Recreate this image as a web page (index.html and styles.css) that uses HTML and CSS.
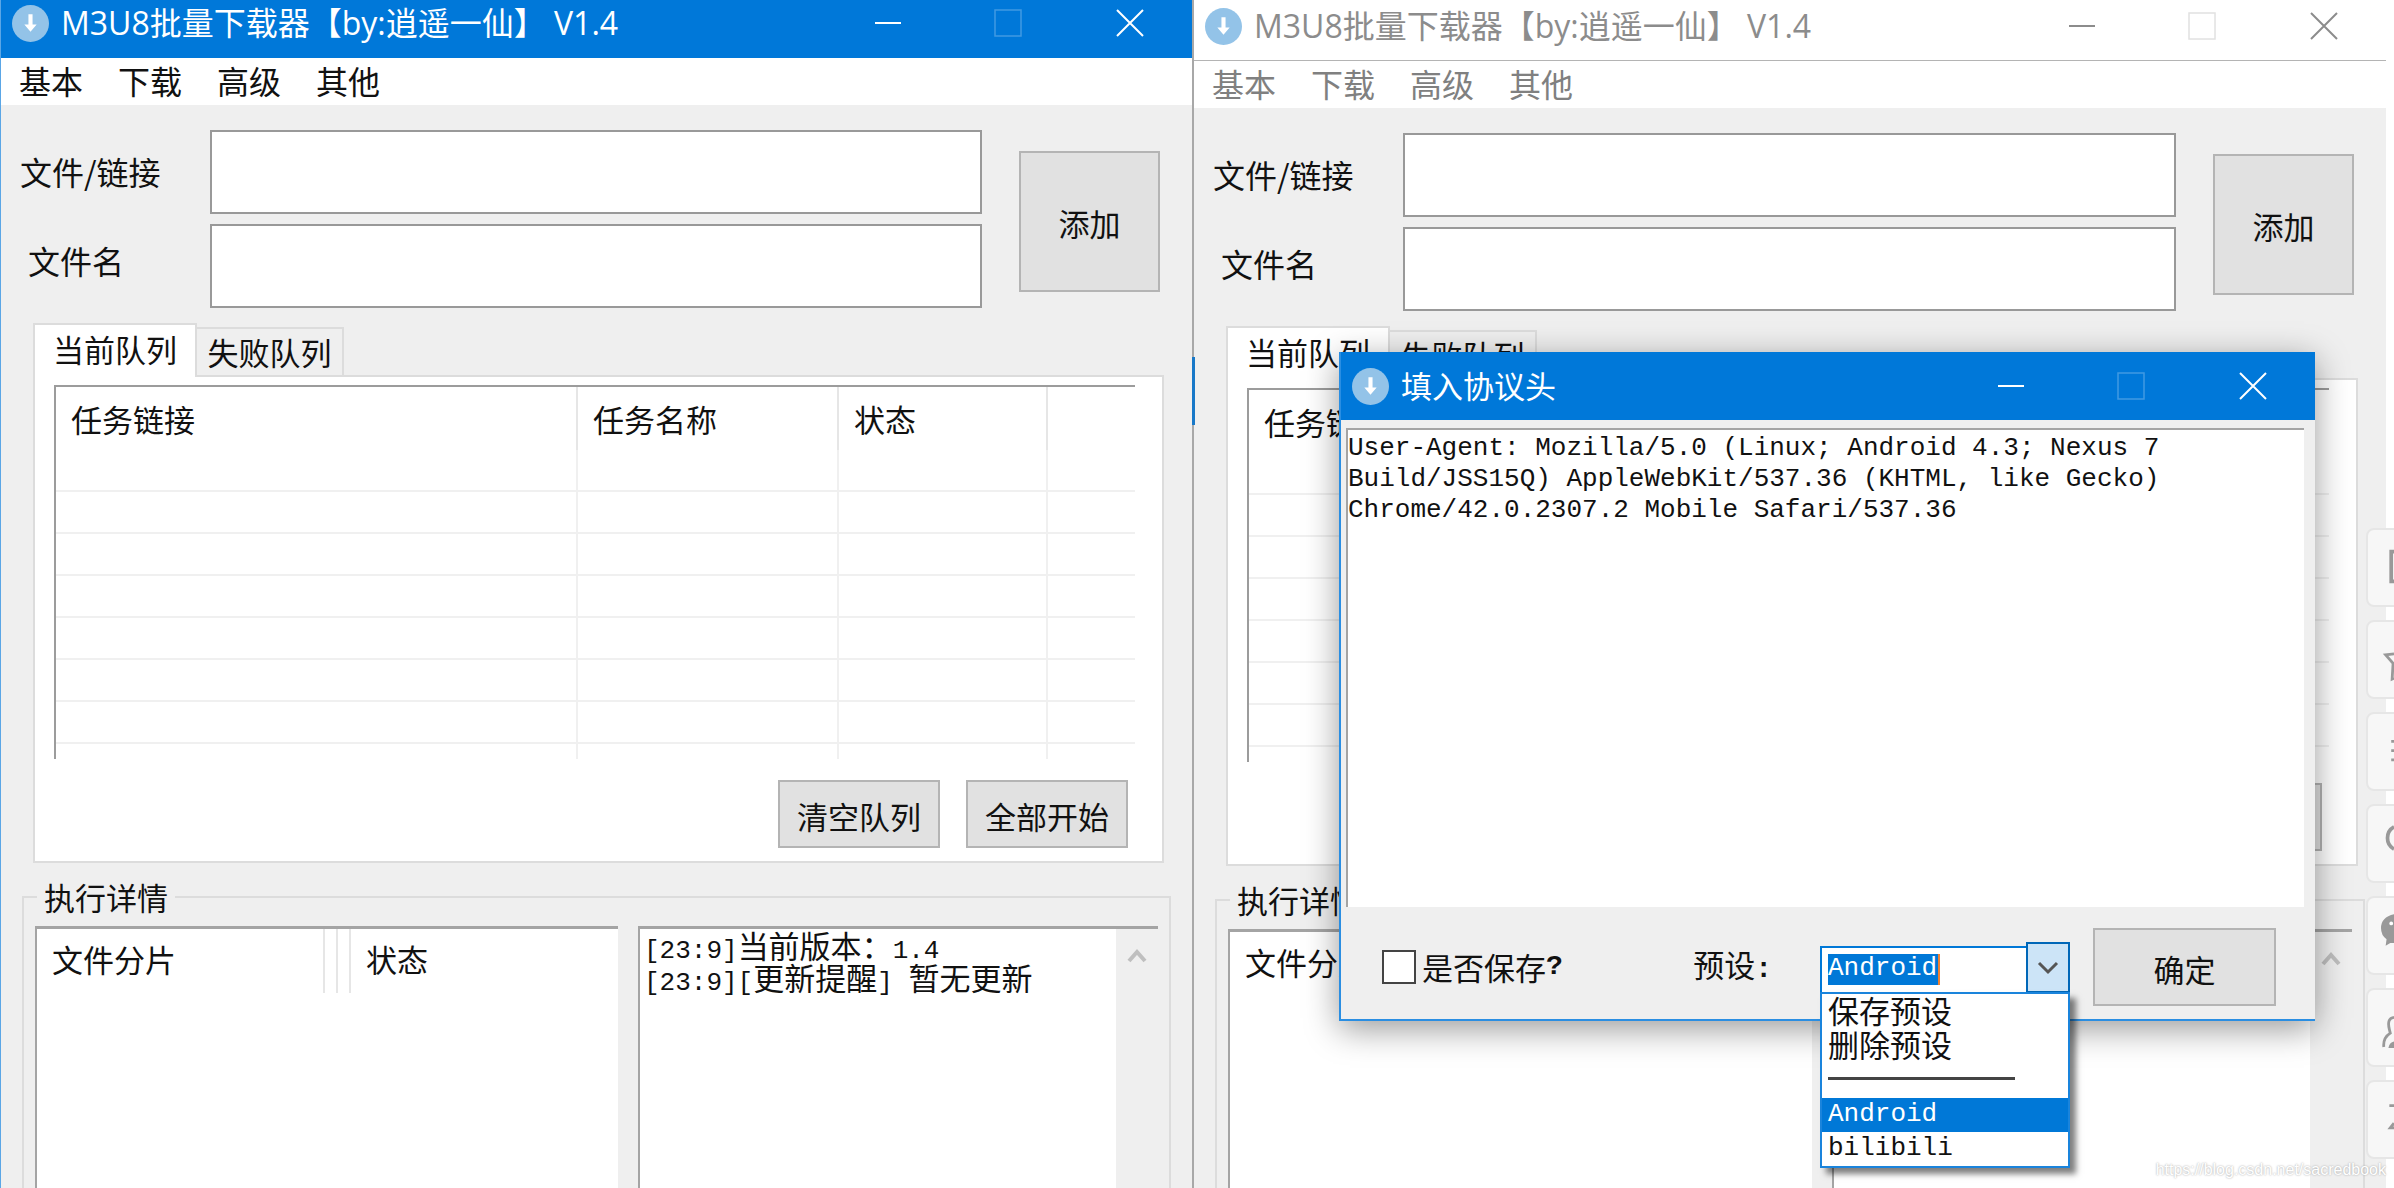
FILE: index.html
```html
<!DOCTYPE html>
<html lang="zh-CN">
<head>
<meta charset="utf-8">
<title>M3U8批量下载器</title>
<link rel="stylesheet" href="styles.css">
</head>
<body>
<svg class="defs" aria-hidden="true">
  <symbol id="logo" viewBox="0 0 36 36"><circle cx="18" cy="18" r="18" fill="#93c3e8"/><path d="M16 9h4v10h4l-6 7-6-7h4z" fill="#fff"/></symbol>
  <symbol id="min" viewBox="0 0 28 28"><path d="M1 14h26" fill="none" stroke="currentColor" stroke-width="2"/></symbol>
  <symbol id="max" viewBox="0 0 28 28"><rect x="1" y="1" width="26" height="26" fill="none" stroke="currentColor" stroke-width="1.5"/></symbol>
  <symbol id="close" viewBox="0 0 28 28"><path d="M1 1l26 26M27 1L1 27" fill="none" stroke="currentColor" stroke-width="2"/></symbol>
  <symbol id="up" viewBox="0 0 20 20"><path d="M2 15l8-9 8 9" fill="none" stroke="#bfbfbf" stroke-width="4"/></symbol>
</svg>

<main class="desktop">
  <section class="window">
    <header class="titlebar">
      <svg class="logo"><use href="#logo"/></svg>
      <h1 class="title">M3U8批量下载器【by:逍遥一仙】 V1.4</h1>
      <button class="ctl" aria-label="最小化"><svg><use href="#min"/></svg></button>
      <button class="ctl ctl-off" aria-label="最大化" disabled><svg><use href="#max"/></svg></button>
      <button class="ctl ctl-close" aria-label="关闭"><svg><use href="#close"/></svg></button>
    </header>
    <nav class="menu">
      <a href="#">基本</a><a href="#">下载</a><a href="#">高级</a><a href="#">其他</a>
    </nav>
    <form class="add-form">
      <div class="fields">
        <label class="label" for="link-a">文件/链接</label><input class="text" id="link-a" type="text">
        <label class="label label-name" for="name-a">文件名</label><input class="text" id="name-a" type="text">
      </div>
      <button class="btn btn-add" type="button">添加</button>
    </form>
    <div class="tabs" role="tablist">
      <button class="tab tab-on" role="tab" aria-selected="true">当前队列</button>
      <button class="tab" role="tab" aria-selected="false">失败队列</button>
    </div>
    <div class="panel">
      <table class="queue">
        <colgroup><col><col class="c-name"><col class="c-state"><col class="c-rest"></colgroup>
        <thead><tr><th>任务链接</th><th>任务名称</th><th>状态</th><th></th></tr></thead>
        <tbody>
          <tr><td></td><td></td><td></td><td></td></tr>
          <tr><td></td><td></td><td></td><td></td></tr>
          <tr><td></td><td></td><td></td><td></td></tr>
          <tr><td></td><td></td><td></td><td></td></tr>
          <tr><td></td><td></td><td></td><td></td></tr>
          <tr><td></td><td></td><td></td><td></td></tr>
          <tr><td></td><td></td><td></td><td></td></tr>
          <tr class="cut"><td></td><td></td><td></td><td></td></tr>
        </tbody>
      </table>
      <div class="actions">
        <button class="btn">清空队列</button>
        <button class="btn">全部开始</button>
      </div>
    </div>
    <fieldset class="details">
      <legend>执行详情</legend>
      <div class="panes">
        <div class="pane pane-parts">
          <table class="parts"><thead><tr><th class="p-name">文件分片</th><th class="p-gap"></th><th class="p-gap"></th><th>状态</th></tr></thead></table>
        </div>
        <div class="pane pane-log">
          <div class="log" role="log">
            <p><span class="mono">[23:9]</span>当前版本：<span class="mono">1.4</span></p>
            <p><span class="mono">[23:9][</span>更新提醒<span class="mono">] </span>暂无更新</p>
          </div>
          <div class="scroll"><svg><use href="#up"/></svg></div>
        </div>
      </div>
    </fieldset>
  </section>

  <section class="window window-back">
    <header class="titlebar">
      <svg class="logo"><use href="#logo"/></svg>
      <h1 class="title">M3U8批量下载器【by:逍遥一仙】 V1.4</h1>
      <button class="ctl" aria-label="最小化"><svg><use href="#min"/></svg></button>
      <button class="ctl ctl-off" aria-label="最大化" disabled><svg><use href="#max"/></svg></button>
      <button class="ctl ctl-close" aria-label="关闭"><svg><use href="#close"/></svg></button>
    </header>
    <nav class="menu">
      <a href="#">基本</a><a href="#">下载</a><a href="#">高级</a><a href="#">其他</a>
    </nav>
    <form class="add-form">
      <div class="fields">
        <label class="label" for="link-b">文件/链接</label><input class="text" id="link-b" type="text">
        <label class="label label-name" for="name-b">文件名</label><input class="text" id="name-b" type="text">
      </div>
      <button class="btn btn-add" type="button">添加</button>
    </form>
    <div class="tabs" role="tablist">
      <button class="tab tab-on" role="tab" aria-selected="true">当前队列</button>
      <button class="tab" role="tab" aria-selected="false">失败队列</button>
    </div>
    <div class="panel">
      <table class="queue">
        <colgroup><col><col class="c-name"><col class="c-state"><col class="c-rest"></colgroup>
        <thead><tr><th>任务链接</th><th></th><th></th><th></th></tr></thead>
        <tbody>
          <tr><td></td><td></td><td></td><td></td></tr>
          <tr><td></td><td></td><td></td><td></td></tr>
          <tr><td></td><td></td><td></td><td></td></tr>
          <tr><td></td><td></td><td></td><td></td></tr>
          <tr><td></td><td></td><td></td><td></td></tr>
          <tr><td></td><td></td><td></td><td></td></tr>
          <tr><td></td><td></td><td></td><td></td></tr>
          <tr class="cut"><td></td><td></td><td></td><td></td></tr>
        </tbody>
      </table>
      <div class="actions">
        <button class="btn" aria-label="全部开始"></button>
      </div>
    </div>
    <fieldset class="details">
      <legend>执行详情</legend>
      <div class="panes">
        <div class="pane pane-parts">
          <table class="parts"><thead><tr><th>文件分片</th></tr></thead></table>
        </div>
        <div class="pane pane-log">
          <div class="log" role="log"></div>
          <div class="scroll"><svg><use href="#up"/></svg></div>
        </div>
      </div>
    </fieldset>

    <div class="dialog" role="dialog" aria-labelledby="dialog-title">
      <header class="titlebar titlebar-dialog">
        <svg class="logo"><use href="#logo"/></svg>
        <h2 class="title" id="dialog-title">填入协议头</h2>
        <button class="ctl" aria-label="最小化"><svg><use href="#min"/></svg></button>
        <button class="ctl ctl-off" aria-label="最大化" disabled><svg><use href="#max"/></svg></button>
        <button class="ctl ctl-close" aria-label="关闭"><svg><use href="#close"/></svg></button>
      </header>
      <textarea class="headers" aria-label="协议头" spellcheck="false">User-Agent: Mozilla/5.0 (Linux; Android 4.3; Nexus 7
Build/JSS15Q) AppleWebKit/537.36 (KHTML, like Gecko)
Chrome/42.0.2307.2 Mobile Safari/537.36</textarea>
      <div class="dialog-bar">
        <label class="save"><input class="check" type="checkbox">是否保存<b>?</b></label>
        <label class="preset-label" for="preset">预设<b>:</b></label>
        <div class="combo">
          <select class="preset" id="preset"><option>Android</option><option>bilibili</option></select>
          <span class="arrow"><svg viewBox="0 0 24 24"><path d="M3 8l9 9 9-9" fill="none" stroke="#555" stroke-width="3"/></svg></span>
          <ul class="options" role="listbox">
            <li role="option">保存预设</li>
            <li role="option">删除预设</li>
            <li class="rule" role="separator"></li>
            <li class="mono option-on" role="option" aria-selected="true">Android</li>
            <li class="mono" role="option">bilibili</li>
          </ul>
        </div>
        <button class="btn btn-ok">确定</button>
      </div>
    </div>
  </section>

  <aside class="rail">
    <button aria-label="目录"><svg viewBox="0 0 28 80"><path d="M28 23h-3v32h3" fill="none" stroke="#999" stroke-width="4"/></svg></button>
    <button aria-label="收藏"><svg viewBox="0 0 28 80"><path d="M28 34l-9 1 8 9-1 17 2-1" fill="none" stroke="#999" stroke-width="3"/></svg></button>
    <button aria-label="列表"><svg viewBox="0 0 28 80"><path d="M25 29h3M25 39h3M25 49h3" fill="none" stroke="#999" stroke-width="3"/></svg></button>
    <button aria-label="评论"><svg viewBox="0 0 28 80"><path d="M28 22q-7 4-7 12t7 12" fill="none" stroke="#999" stroke-width="4"/></svg></button>
    <button aria-label="微信"><svg viewBox="0 0 28 80"><path d="M28 17q-14 3-14 15 0 8 6 12l-1 7 5-3h4z" fill="#999"/><circle cx="25" cy="27" r="2" fill="#fff"/></svg></button>
    <button aria-label="用户"><svg viewBox="0 0 28 80"><path d="M28 29q-8 1-5 13l1 4q-8 5-7 15" fill="none" stroke="#999" stroke-width="3"/><path d="M28 55q-5 1-6 7h6z" fill="#999"/></svg></button>
    <button aria-label="更多"><svg viewBox="0 0 28 80"><path d="M23 25h5M28 44l-4 5h4" fill="none" stroke="#999" stroke-width="3"/></svg></button>
  </aside>
  <p class="watermark">https://blog.csdn.net/sacredbook</p>
</main>
</body>
</html>
```

FILE: styles.css
```css
* { box-sizing: border-box; }

body {
  margin: 0;
  background: #fff;
  color: #111;
  font: 31px/40px "Noto Sans CJK SC", sans-serif;
}

button, input, select, textarea { font: inherit; color: inherit; margin: 0; }
h1, h2, p, ul { margin: 0; padding: 0; }
a { color: inherit; text-decoration: none; }
.defs { position: absolute; width: 0; height: 0; }
.mono { font-family: "Liberation Mono", monospace; font-size: 26px; white-space: pre; }

.desktop {
  position: relative;
  display: grid;
  grid-template-columns: minmax(0, 1192fr) minmax(0, 1194fr);
  height: 100vh;
  padding-right: 8px;
  overflow: hidden;
}

.window {
  position: relative;
  min-width: 0;
  background: #efefef;
  border-left: 1px solid #5aa6e6;
}
.window-back { border-left: 2px solid #a8a8a8; }
.window-back::before {
  content: "";
  position: absolute;
  left: -2px;
  top: 357px;
  width: 3px;
  height: 68px;
  background: #1878c8;
}

/* Title bars */
.titlebar {
  display: flex;
  align-items: center;
  height: 58px;
  padding: 0 0 12px 11px;
  background: #0078d9;
  color: #fff;
}
.window-back > .titlebar {
  height: 61px;
  padding-bottom: 8px;
  background: #fff;
  border-bottom: 1px solid #b4b4b4;
  color: #8c8c8c;
}
.titlebar-dialog { height: 68px; padding-bottom: 0; }
.logo { flex: none; width: 37px; height: 37px; margin-right: 12px; }
.title {
  flex: 1;
  font: 400 32px/40px "Open Sans", "Noto Sans CJK SC", sans-serif;
  white-space: pre;
}
.titlebar-dialog .title { font-size: 31px; }
.ctl {
  display: flex;
  align-items: center;
  justify-content: center;
  width: 120px;
  height: 40px;
  padding: 0;
  border: 0;
  background: none;
}
.ctl svg { width: 28px; height: 28px; }
.ctl-close { width: 124px; }
.ctl-off { opacity: .25; }

.menu {
  display: flex;
  gap: 35px;
  height: 47px;
  padding: 2px 18px;
  background: #fff;
  font-size: 32px;
}
.menu a { color: #111; }
.window-back .menu a { color: #808080; }

/* Link and name form */
.add-form {
  display: flex;
  align-items: flex-end;
  gap: 37px;
  padding: 25px 32px 15px 0;
}
.fields {
  flex: 1;
  display: grid;
  grid-template-columns: 209px 1fr;
  row-gap: 10px;
}
.label { padding-left: 19px; font-size: 32px; line-height: 82px; }
.label-name { padding-left: 27px; line-height: 72px; }
.text {
  width: 100%;
  height: 84px;
  padding: 0 12px;
  border: 2px solid #999;
  background: #fff;
}
.btn {
  width: 162px;
  height: 68px;
  padding: 3px 0 0;
  border: 2px solid #b4b4b4;
  background: #e1e1e1;
  text-align: center;
}
.btn-add { width: 141px; height: 141px; margin-bottom: 16px; }

/* Queue tabs and table */
.tabs { display: flex; align-items: flex-end; padding-left: 32px; }
.tab {
  width: 147px;
  height: 48px;
  padding: 0;
  border: 2px solid #dcdcdc;
  border-bottom: 0;
  border-left: 0;
  background: #efefef;
}
.tab-on {
  position: relative;
  width: 164px;
  height: 54px;
  margin-bottom: -2px;
  padding-bottom: 4px;
  border-left: 2px solid #dcdcdc;
  background: #fff;
}
.panel {
  margin: 0 28px 0 32px;
  padding: 8px 27px 13px 19px;
  border: 2px solid #dcdcdc;
  background: #fff;
}
.queue {
  width: 100%;
  table-layout: fixed;
  border-collapse: separate;
  border-spacing: 0;
  border-top: 2px solid #9c9c9c;
  border-left: 2px solid #9c9c9c;
}
.c-name { width: 261px; }
.c-state { width: 209px; }
.c-rest { width: 87px; }
.queue th {
  height: 63px;
  padding: 0 15px;
  border-right: 2px solid #e6e6e6;
  font-weight: 400;
  text-align: left;
}
.queue td {
  height: 42px;
  padding: 0;
  border-right: 2px solid #f0f0f0;
  border-bottom: 2px solid #f0f0f0;
}
.queue th:last-child, .queue td:last-child { border-right: 0; }
.queue .cut td { height: 15px; border-bottom: 0; }
.actions {
  display: flex;
  justify-content: flex-end;
  gap: 26px;
  padding: 21px 7px 0 0;
}

/* Details group */
.details {
  min-width: 0;
  margin: 14px 21px 0;
  padding: 9px 11px 0;
  border: 2px solid #dcdcdc;
  border-bottom: 0;
}
.details legend { margin-left: 2px; padding: 0 7px; }
.panes {
  display: grid;
  grid-template-columns: 583fr 520fr;
  gap: 20px;
  height: calc(100vh - 926px);
}
.pane {
  min-width: 0;
  border-top: 3px solid #a4a4a4;
  border-left: 2px solid #a4a4a4;
  background: #fff;
}
.parts { border-collapse: separate; border-spacing: 0; }
.parts th {
  height: 64px;
  padding: 0 15px 4px;
  font-weight: 400;
  text-align: left;
}
.parts .p-name { width: 288px; border-right: 2px solid #e6e6e6; }
.parts .p-gap { width: 13px; padding: 0; border-right: 2px solid #e6e6e6; }
.pane-log { display: flex; }
.log { flex: 1; padding-left: 4px; white-space: nowrap; }
.log p { height: 32px; line-height: 32px; }
.log .mono { line-height: 20px; }
.scroll { width: 42px; padding-top: 14px; background: #efefef; text-align: center; line-height: 20px; }
.scroll svg { width: 20px; height: 20px; }

/* Header dialog */
.dialog {
  position: absolute;
  top: 352px;
  left: 145px;
  right: 71px;
  border: 2px solid #2a8ee2;
  border-top: 0;
  border-right: 0;
  background: #efefef;
  box-shadow: 0 8px 32px rgba(0, 0, 0, .4);
}
.headers {
  display: block;
  width: calc(100% - 16px);
  height: 479px;
  margin: 8px 0 0 5px;
  padding: 3px 0 0;
  border: 0;
  border-top: 2px solid #a4a4a4;
  border-left: 2px solid #a4a4a4;
  outline: 0;
  resize: none;
  overflow: hidden;
  background: #fff;
  font: 26px/31px "Liberation Mono", monospace;
}
.dialog-bar {
  display: flex;
  align-items: center;
  height: 112px;
  padding: 8px 39px 0 41px;
}
.dialog-bar b { font-family: "Liberation Mono", monospace; font-size: 28px; }
.save { display: flex; align-items: center; }
.check {
  appearance: none;
  width: 34px;
  height: 34px;
  margin-right: 6px;
  border: 2px solid #444;
  background: #fff;
}
.preset-label { margin-left: auto; margin-right: 48px; }
.combo { position: relative; width: 250px; height: 51px; margin-right: 23px; }
.preset {
  appearance: none;
  width: 100%;
  height: 100%;
  padding: 0 0 6px 6px;
  border: 2px solid #0078d7;
  border-radius: 0;
  background:
    linear-gradient(#0078d7, #0078d7) 6px 6px / 110px 31px no-repeat,
    linear-gradient(#f08030, #f08030) 116px 6px / 2px 31px no-repeat,
    #fff;
  color: #fff;
  font: 26px/31px "Liberation Mono", monospace;
}
.arrow {
  position: absolute;
  top: 0;
  right: 0;
  display: flex;
  align-items: center;
  justify-content: center;
  width: 44px;
  height: 51px;
  border: 2px solid #0067b8;
  background: #cce4f7;
  pointer-events: none;
}
.arrow svg { width: 24px; height: 24px; }
.options {
  position: absolute;
  top: 50px;
  left: 0;
  right: 0;
  padding-top: 2px;
  border: 2px solid #1a84dc;
  background: #fff;
  box-shadow: 6px 6px 6px rgba(0, 0, 0, .5);
  list-style: none;
}
.options li { height: 34px; padding-left: 6px; line-height: 28px; }
.options .mono { line-height: 33px; }
.options .rule { padding: 13px 53px 0 6px; }
.rule::before { content: ""; display: block; height: 3px; background: #444; }
.options .option-on { background: #0078d7; color: #fff; }
.btn-ok { width: 183px; height: 78px; }

/* Floating page buttons */
.rail {
  position: absolute;
  top: 528px;
  right: -52px;
  display: grid;
  gap: 13px;
}
.rail button {
  width: 80px;
  height: 79px;
  padding: 0;
  border: 2px solid #e6e6e6;
  border-radius: 8px;
  background: #f7f7f7;
  text-align: left;
}
.rail svg { display: block; width: 26px; height: 75px; }
.watermark {
  position: absolute;
  right: 8px;
  bottom: 8px;
  color: #fff;
  font: 16px/20px "Liberation Sans", sans-serif;
  text-shadow: 0 0 2px #999;
}
```
